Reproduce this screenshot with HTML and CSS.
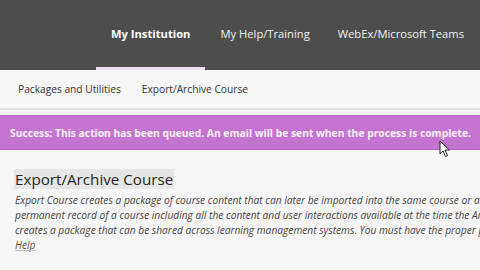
FILE: index.html
```html
<!DOCTYPE html>
<html>
<head>
<meta charset="utf-8">
<link rel="stylesheet" href="styles.css">
</head>
<body>
<header class="topbar">
  <nav class="mainnav">
    <a class="tab active">My Institution</a>
    <a class="tab">My Help/Training</a>
    <a class="tab">WebEx/Microsoft Teams</a>
  </nav>
</header>
<div class="subnav">
  <a class="sublink">Packages and Utilities</a>
  <a class="sublink">Export/Archive Course</a>
</div>
<div class="banner">Success: This action has been queued. An email will be sent when the process is complete.</div>
<main class="content">
  <h1 class="title"><span class="hl">Export/Archive Course</span></h1>
  <p class="desc">Export Course creates a package of course content that can later be imported into the same course or another course. Archive Course creates a<br>permanent record of a course including all the content and user interactions available at the time the Archive is made. Common Cartridge Export<br>creates a package that can be shared across learning management systems. You must have the proper permissions.<br><a class="help">Help</a></p>
</main>
<svg class="cursor" width="12" height="18" viewBox="0 0 12 18"><path d="M1 1 L1 14 L4 11 L6.5 16.5 L8.5 15.5 L6 10 L10.5 10 Z" fill="#fff" stroke="#222" stroke-width="1"/></svg>
</body>
</html>
```
FILE: styles.css
```css
html, body { margin: 0; padding: 0; }
body {
  width: 480px; height: 270px; overflow: hidden;
  background: #f6f6f6;
  font-family: "Open Sans", sans-serif;
  position: relative;
}
.topbar {
  background: #4d4d4d;
  height: 70px;
}
.mainnav {
  display: flex;
  padding-left: 96px;
  height: 70px;
}
.tab {
  color: #f2f2f2;
  font-size: 11.2px;
  display: flex;
  align-items: center;
  padding: 0 15px;
  height: 67px;
  border-bottom: 3px solid transparent;
  white-space: nowrap;
}
.tab.active {
  font-weight: 700;
  color: #fff;
  border-bottom-color: #efdff2;
}
.tab:last-child { padding-left: 13px; }
.subnav {
  height: 38px;
  display: flex;
  align-items: center;
  gap: 21px;
  padding-left: 18px;
  border-bottom: 2px solid #e2e2e2;
  background: #f7f7f7;
}
.sublink { font-size: 10.2px; color: #333; }
.banner {
  margin-top: 5px;
  background: #c474d0;
  border-top: 1px solid #b365c0;
  border-bottom: 1px solid #b365c0;
  color: #fbf0fc;
  font-weight: 700;
  font-size: 10.3px;
  height: 33px;
  display: flex;
  align-items: center;
  padding-left: 10px;
  white-space: nowrap;
}
.content { padding: 19px 15px 0; }
.title { margin: 0; font-weight: 400; font-size: 15.2px; color: #262626; line-height: 20px; }
.hl { background: #e6e6e6; padding: 0 1px; margin-left: -1px; }
.desc {
  margin: 4px 0 0;
  font-style: italic;
  font-size: 10.2px;
  line-height: 15px;
  color: #444;
  white-space: nowrap;
}
.help { color: #555; text-decoration: underline; text-decoration-color: #bbb; }
.cursor { position: absolute; left: 439px; top: 140px; }
```
